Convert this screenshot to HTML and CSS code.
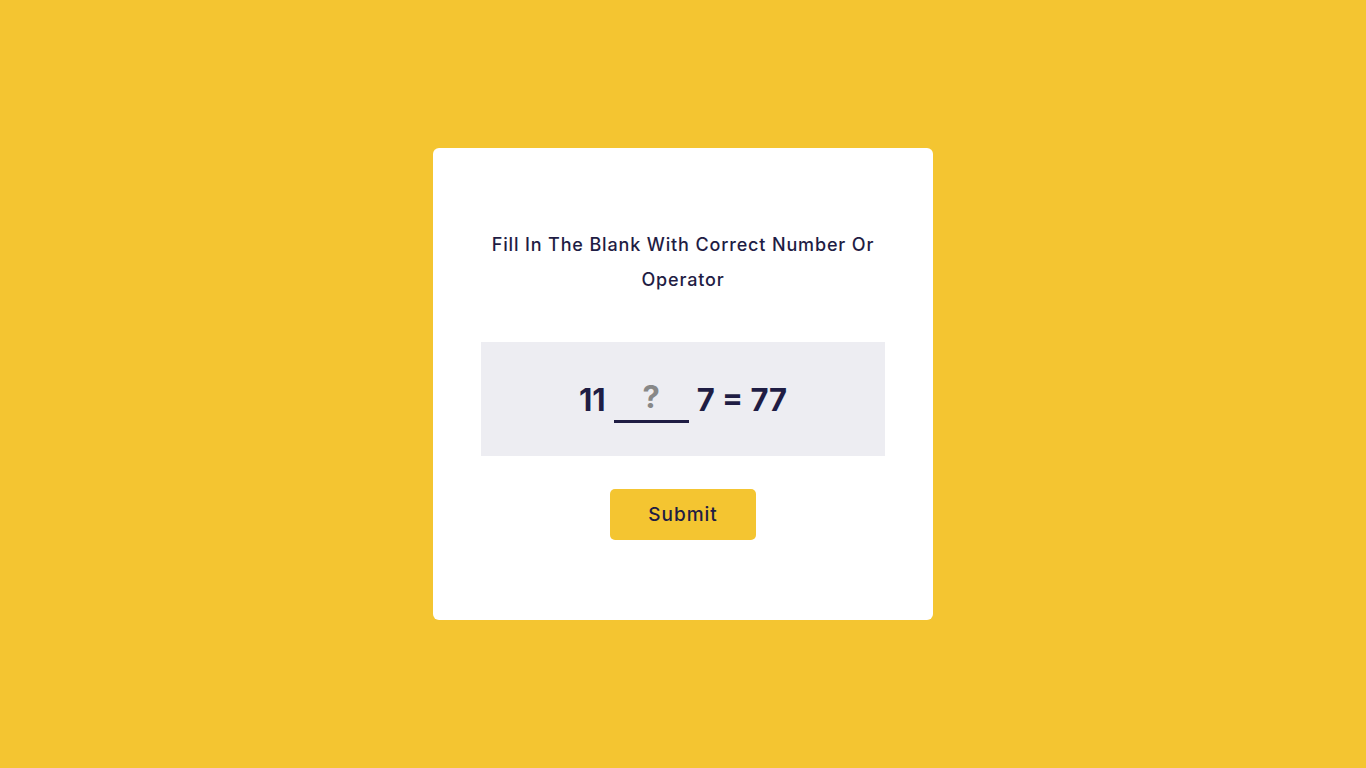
FILE: index.html
```html
<!DOCTYPE html>
<html lang="en">
<head>
<meta charset="utf-8">
<title>Fill In The Blank</title>
<link rel="stylesheet" href="styles.css">
</head>
<body>
  <main class="card">
    <h1 class="title">Fill In The Blank With Correct Number Or Operator</h1>
    <div class="equation">
      <span class="num">11</span>
      <span class="blank">?</span>
      <span class="num">7 = 77</span>
    </div>
    <button class="submit" type="button">Submit</button>
  </main>
</body>
</html>
```

FILE: styles.css
```css
* { box-sizing: border-box; }
html, body { margin: 0; padding: 0; }
body {
  background: #f4c531;
  height: 100vh;
  display: flex;
  align-items: center;
  justify-content: center;
  font-family: "Inter", "Noto Sans", sans-serif;
  color: #1f1d44;
}
.card {
  width: 500px;
  height: 472px;
  background: #ffffff;
  border-radius: 6px;
  padding: 79px 48px 0;
  display: flex;
  flex-direction: column;
  align-items: center;
}
.title {
  margin: 0;
  font-size: 18px;
  font-weight: 500;
  line-height: 35px;
  letter-spacing: 0.85px;
  text-align: center;
  padding: 0 4px;
}
.equation {
  margin-top: 45px;
  width: 100%;
  height: 114px;
  background: #ededf2;
  display: flex;
  align-items: center;
  justify-content: center;
  gap: 8px;
  font-size: 31px;
  font-weight: 700;
}
.num { line-height: 1; }
.num-first { letter-spacing: -1px; }
.blank {
  width: 75px;
  height: 48px;
  border-bottom: 3px solid #1f1d44;
  color: #888888;
  text-align: center;
  line-height: 44px;
}
.submit {
  margin-top: 33px;
  width: 146px;
  height: 51px;
  background: #f4c531;
  border: none;
  border-radius: 5px;
  font-family: inherit;
  font-size: 19px;
  font-weight: 500;
  letter-spacing: 1px;
  color: #1f1d44;
}
```
